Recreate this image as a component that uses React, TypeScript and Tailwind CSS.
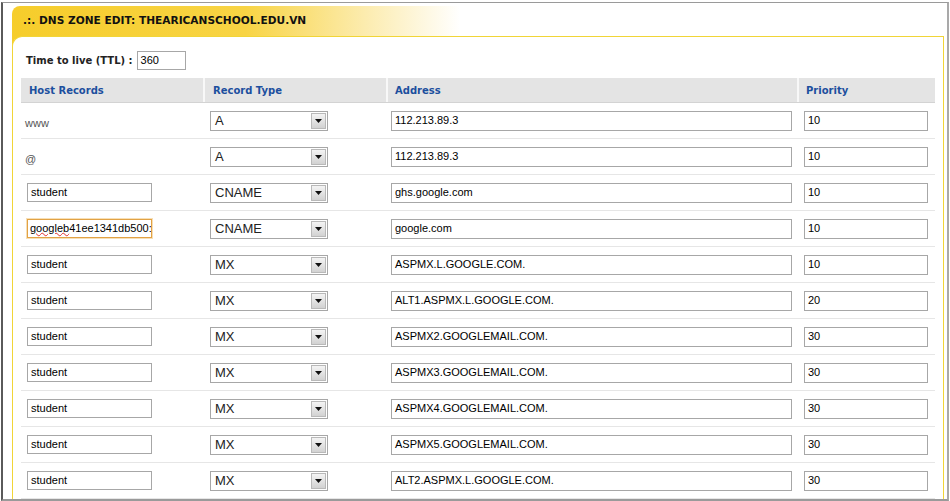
const rows = [
  { host: "www", plain: true, type: "A", address: "112.213.89.3", priority: "10" },
  { host: "@", plain: true, type: "A", address: "112.213.89.3", priority: "10" },
  { host: "student", type: "CNAME", address: "ghs.google.com", priority: "10" },
  { host: "googleb41ee1341db500:", focused: true, type: "CNAME", address: "google.com", priority: "10" },
  { host: "student", type: "MX", address: "ASPMX.L.GOOGLE.COM.", priority: "10" },
  { host: "student", type: "MX", address: "ALT1.ASPMX.L.GOOGLE.COM.", priority: "20" },
  { host: "student", type: "MX", address: "ASPMX2.GOOGLEMAIL.COM.", priority: "30" },
  { host: "student", type: "MX", address: "ASPMX3.GOOGLEMAIL.COM.", priority: "30" },
  { host: "student", type: "MX", address: "ASPMX4.GOOGLEMAIL.COM.", priority: "30" },
  { host: "student", type: "MX", address: "ASPMX5.GOOGLEMAIL.COM.", priority: "30" },
  { host: "student", type: "MX", address: "ALT2.ASPMX.L.GOOGLE.COM.", priority: "30" },
];

const tahoma = "font-['DejaVu_Sans',sans-serif]";
const arial = "font-['Liberation_Sans',Arial,sans-serif]";

function TextBox({ value, width, height = "h-[20px]" }: { value: string; width: string; height?: string }) {
  return (
    <div
      className={`${width} ${height} border border-[#a7a7a7] bg-white flex items-center px-[3px] overflow-hidden whitespace-nowrap text-[11px] text-black ${arial}`}
    >
      {value}
    </div>
  );
}

function Select({ value }: { value: string }) {
  return (
    <div className="w-[118px] h-[20px] border border-[#a7a7a7] bg-white flex items-center">
      <span className={`flex-1 pl-[4px] text-[13px] text-[#222] leading-none ${arial}`}>{value}</span>
      <div className="w-[15px] h-[16px] mr-[1px] border border-[#b9b9b9] bg-[linear-gradient(to_bottom,#f4f4f4,#d2d2d2)] flex items-center justify-center">
        <svg width="7" height="4" viewBox="0 0 7 4">
          <path d="M0 0H7L3.5 4Z" fill="#111" />
        </svg>
      </div>
    </div>
  );
}

export default function App() {
  return (
    <div className="w-[950px] h-[501px] overflow-hidden bg-white pt-[2px] pl-[1px]">
      <div className="w-[948px] h-[499px] overflow-hidden border-l-2 border-t border-r-2 border-b-2 border-l-[#5a5a5a] border-t-[#9a9a9a] border-r-[#a9a9a9] border-b-[#9a9a9a] pt-[3px] pl-[9px] pr-[1px]">
        <div className="h-full flex flex-col rounded-tl-[8px] bg-[linear-gradient(to_right,#f6cd2b_0%,#f8d444_25%,#fcecb0_38%,#ffffff_48%)]">
          {/* title */}
          <div className={`h-[30px] shrink-0 flex items-center pl-[11px] text-[10.6px] font-bold text-[#111] ${tahoma}`}>
            .:. DNS ZONE EDIT: THEARICANSCHOOL.EDU.VN
          </div>

          {/* body */}
          <div className="flex-1 bg-white border-t border-l border-r border-[#f1d537] rounded-tl-[10px] mr-[2px] px-[8px] pt-[14px]">
            <div className="flex items-center h-[19px] ml-[5px]">
              <span className={`text-[10px] font-bold text-[#222] ${tahoma}`}>Time to live (TTL) :</span>
              <div className="ml-[4px]">
                <TextBox value="360" width="w-[49px]" height="h-[19px]" />
              </div>
            </div>

            {/* header */}
            <div className={`mt-[8px] grid grid-cols-[182px_183px_411px_138px] h-[25px] bg-[#e4e4e4] border-b border-[#d3d3d3] text-[10px] font-bold text-[#1c4f9e] ${tahoma}`}>
              <div className="flex items-center pl-[8px]">Host Records</div>
              <div className="flex items-center pl-[8px] border-l-2 border-[#f8f8f8]">Record Type</div>
              <div className="flex items-center pl-[7px] border-l-2 border-[#f8f8f8]">Address</div>
              <div className="flex items-center pl-[7px] border-l-2 border-[#f8f8f8]">Priority</div>
            </div>

            {/* rows */}
            {rows.map((r, i) => (
              <div
                key={i}
                className="grid grid-cols-[182px_183px_411px_138px] h-[36px] border-b border-[#e6e6e6] items-center"
              >
                <div className="pl-[6px]">
                  {r.plain ? (
                    <span className={`-ml-[2px] text-[11px] text-[#555] ${arial}`}>{r.host}</span>
                  ) : r.focused ? (
                    <div
                      className={`w-[125px] h-[19px] border border-[#e2a244] shadow-[0_0_0_1px_#f7dfb6] bg-white flex items-center px-[2px] overflow-hidden whitespace-nowrap text-[11px] leading-none text-black ${arial}`}
                    >
                      <span className="underline decoration-wavy decoration-[#e03030] decoration-[1px] underline-offset-[0px]">googleb</span>
                      <span>41ee1341db500:</span>
                    </div>
                  ) : (
                    <TextBox value={r.host} width="w-[125px]" height="h-[19px]" />
                  )}
                </div>
                <div className="pl-[7px]">
                  <Select value={r.type} />
                </div>
                <div className="pl-[5px]">
                  <TextBox value={r.address} width="w-[401px]" />
                </div>
                <div className="pl-[7px]">
                  <TextBox value={r.priority} width="w-[124px]" />
                </div>
              </div>
            ))}
          </div>
        </div>
      </div>
    </div>
  );
}
